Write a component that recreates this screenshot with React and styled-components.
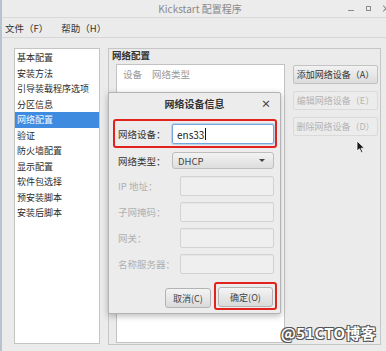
import React from "react";
import styled, { createGlobalStyle } from "styled-components";

const Global = createGlobalStyle`
  html, body { margin: 0; padding: 0; }
  body {
    width: 386px; height: 351px; overflow: hidden;
    background: #e6e6e6;
    font-family: "Noto Sans CJK SC", "Noto Sans", sans-serif;
    color: #333;
  }
`;

const Window = styled.div`
  position: relative;
  height: 351px;
  box-sizing: border-box;
  border-left: 2px solid #b7c4d0;
  background: #ebebeb;
  display: flex;
  flex-direction: column;
`;

const TitleBar = styled.div`
  height: 17px;
  display: grid;
  grid-template-columns: 1fr auto 1fr;
  align-items: center;
  background: #ececec;
  border-bottom: 1px solid #d9d9d9;
`;

const TitleText = styled.div`
  grid-column: 2;
  margin-left: 12px;
  font-size: 10px;
  color: #8a8a8a;
  white-space: nowrap;
  line-height: 17px;
`;

const Controls = styled.div`
  grid-column: 3;
  justify-self: end;
  display: flex;
  align-items: center;
  gap: 12px;
  margin-right: -3px;
`;

const Minimize = styled.span`
  width: 6px; height: 1px; background: #8a8a8a; margin-top: 4px;
`;
const Maximize = styled.span`
  width: 5px; height: 5px; border: 1px solid #8a8a8a; box-sizing: border-box;
`;
const CloseMark = styled.span`
  position: relative;
  width: 6px;
  height: 6px;
  &::before, &::after {
    content: "";
    position: absolute;
    left: -1px;
    top: 2.5px;
    width: 8px;
    height: 1px;
    background: #8a8a8a;
  }
  &::before { transform: rotate(45deg); }
  &::after { transform: rotate(-45deg); }
`;

const MenuBar = styled.div`
  height: 19px;
  display: flex;
  align-items: center;
  gap: 13px;
  padding-left: 3px;
  font-size: 9.5px;
  color: #333;
  border-bottom: 1px solid #d6d6d6;
`;

const MenuItem = styled.span`
  white-space: nowrap;
`;

const Body = styled.div`
  flex: 1;
  display: flex;
  gap: 8px;
  padding: 10px 5px 0 12px;
  min-height: 0;
`;

const SideList = styled.div`
  width: 86px;
  height: 296px;
  box-sizing: border-box;
  background: #fff;
  border: 1px solid #c4c4c4;
  padding-top: 1px;
  display: flex;
  flex-direction: column;
`;

const SideItem = styled.div`
  height: 15.5px;
  line-height: 15.5px;
  padding-left: 2px;
  font-size: 9px;
  white-space: nowrap;
  overflow: hidden;
  color: ${(p) => (p.$active ? "#f4f8ff" : "#2a2a2a")};
  background: ${(p) => (p.$active ? "#3f8be0" : "transparent")};
`;

const Frame = styled.div`
  position: relative;
  flex: 1;
  height: 297px;
  box-sizing: border-box;
  border: 1px solid #c6c6c6;
  display: flex;
  flex-direction: column;
`;

const FrameLabel = styled.div`
  height: 14px;
  line-height: 13px;
  padding-left: 3px;
  font-size: 9.5px;
  font-weight: 600;
  color: #333;
`;

const FrameContent = styled.div`
  flex: 1;
  display: flex;
  gap: 8px;
  padding: 1px 2px 1px 7px;
  min-height: 0;
`;

const DeviceList = styled.div`
  width: 169px;
  box-sizing: border-box;
  background: #fff;
  border: 1px solid #c2c2c2;
  display: flex;
  flex-direction: column;
`;

const ListHeader = styled.div`
  display: flex;
  gap: 10px;
  padding: 2px 0 0 6px;
  font-size: 9.5px;
  color: #9a9a9a;
  height: 16px;
`;

const ButtonColumn = styled.div`
  flex: 1;
  display: flex;
  flex-direction: column;
  gap: 7px;
  padding-top: 1px;
`;

const SideButton = styled.div`
  height: 19px;
  box-sizing: border-box;
  display: flex;
  align-items: center;
  justify-content: center;
  font-size: 9px;
  white-space: nowrap;
  border-radius: 2px;
  border: 1px solid ${(p) => (p.$disabled ? "#dadada" : "#c2c2c2")};
  color: ${(p) => (p.$disabled ? "#b4b4b4" : "#333")};
  background: ${(p) =>
    p.$disabled ? "#ececec" : "linear-gradient(#f2f2f2, #dcdcdc)"};
`;

const Dialog = styled.div`
  position: absolute;
  left: -1px;
  top: 43px;
  width: 173px;
  height: 222px;
  box-sizing: border-box;
  background: #ececec;
  border: 1px solid #b4b4b4;
  border-radius: 2px;
  box-shadow: 0 2px 6px rgba(0, 0, 0, 0.28);
  display: flex;
  flex-direction: column;
`;

const DialogTitle = styled.div`
  height: 20px;
  display: grid;
  grid-template-columns: 1fr auto 1fr;
  align-items: center;
`;

const DialogTitleText = styled.div`
  grid-column: 2;
  font-size: 10px;
  font-weight: 700;
  color: #333;
`;

const DialogClose = styled.div`
  grid-column: 3;
  justify-self: end;
  margin-right: 9px;
  font-size: 10px;
  font-weight: 700;
  color: #444;
`;

const Form = styled.div`
  display: flex;
  flex-direction: column;
  padding: 6px 3px 0 4px;
`;

const Highlight = styled.div`
  box-sizing: border-box;
  border: 2px solid #e2231d;
  border-radius: 3px;
  padding: ${(p) => p.$pad};
`;

const FieldRow = styled.div`
  display: flex;
  align-items: center;
  margin-top: ${(p) => p.$mt || 0}px;
  padding-left: ${(p) => p.$pl || 0}px;
  padding-right: ${(p) => p.$pr || 0}px;
`;

const Label = styled.div`
  width: ${(p) => (p.$wide ? 62 : 54)}px;
  flex: none;
  font-size: 9.5px;
  white-space: nowrap;
  color: ${(p) => (p.$disabled ? "#b0b0b0" : "#333")};
`;

const TextInput = styled.div`
  flex: 1;
  height: 20px;
  box-sizing: border-box;
  display: flex;
  align-items: center;
  padding-left: 4px;
  font-size: 10px;
  color: #222;
  border-radius: 2px;
  background: ${(p) => (p.$disabled ? "#efefef" : "#fff")};
  border: 1px solid ${(p) => (p.$focused ? "#74a7e0" : p.$disabled ? "#d3d3d3" : "#c2c2c2")};
  box-shadow: ${(p) => (p.$focused ? "0 0 0 1px rgba(116,167,224,0.35)" : "inset 0 1px 1px rgba(0,0,0,0.04)")};
`;

const Caret = styled.span`
  display: inline-block;
  width: 1px;
  height: 12px;
  background: #111;
  margin-left: 1px;
`;

const Select = styled.div`
  flex: 1;
  height: 17px;
  box-sizing: border-box;
  display: flex;
  align-items: center;
  justify-content: space-between;
  padding: 0 8px 0 5px;
  font-size: 9.5px;
  color: #444;
  border: 1px solid #bdbdbd;
  border-radius: 3px;
  background: linear-gradient(#f3f3f3, #dddddd);
`;

const Arrow = styled.span`
  width: 0; height: 0;
  border-left: 3px solid transparent;
  border-right: 3px solid transparent;
  border-top: 3px solid #444;
`;

const ButtonRow = styled.div`
  display: flex;
  justify-content: flex-end;
  align-items: flex-end;
  gap: 3px;
  margin-top: 8px;
`;

const DialogButton = styled.div`
  width: ${(p) => p.$w}px;
  height: 20px;
  box-sizing: border-box;
  display: flex;
  align-items: center;
  justify-content: center;
  font-size: 9px;
  color: #444;
  border: 1px solid #b3b3b3;
  border-radius: 3px;
  background: linear-gradient(#f4f4f4, #dadada);
  margin-bottom: ${(p) => p.$mb || 0}px;
`;

const Watermark = styled.div`
  position: absolute;
  right: 10px;
  bottom: 8px;
  font-size: 15px;
  font-weight: 700;
  color: #fff;
  letter-spacing: 0.3px;
  text-shadow: -1px -1px 0 #555, 1px -1px 0 #555, -1px 1px 0 #555, 1px 1px 0 #555;
`;

const Pointer = styled.svg`
  position: absolute;
  left: 354px;
  top: 140px;
`;

const sideItems = [
  "基本配置",
  "安装方法",
  "引导装载程序选项",
  "分区信息",
  "网络配置",
  "验证",
  "防火墙配置",
  "显示配置",
  "软件包选择",
  "预安装脚本",
  "安装后脚本",
];

export default function App() {
  return (
    <>
      <Global />
      <Window>
        <TitleBar>
          <TitleText>Kickstart 配置程序</TitleText>
          <Controls>
            <Minimize />
            <Maximize />
            <CloseMark />
          </Controls>
        </TitleBar>
        <MenuBar>
          <MenuItem>文件（F）</MenuItem>
          <MenuItem>帮助（H）</MenuItem>
        </MenuBar>
        <Body>
          <SideList>
            {sideItems.map((t) => (
              <SideItem key={t} $active={t === "网络配置"}>
                {t}
              </SideItem>
            ))}
          </SideList>
          <Frame>
            <FrameLabel>网络配置</FrameLabel>
            <FrameContent>
              <DeviceList>
                <ListHeader>
                  <span>设备</span>
                  <span>网络类型</span>
                </ListHeader>
              </DeviceList>
              <ButtonColumn>
                <SideButton>添加网络设备（A）</SideButton>
                <SideButton $disabled>编辑网络设备（E）</SideButton>
                <SideButton $disabled>删除网络设备（D）</SideButton>
              </ButtonColumn>
            </FrameContent>
            <Dialog>
              <DialogTitle>
                <DialogTitleText>网络设备信息</DialogTitleText>
                <DialogClose>×</DialogClose>
              </DialogTitle>
              <Form>
                <Highlight $pad="3px 1px 2px 3px">
                  <FieldRow>
                    <Label>网络设备：</Label>
                    <TextInput $focused>
                      ens33
                      <Caret />
                    </TextInput>
                  </FieldRow>
                </Highlight>
                <FieldRow $mt={4} $pl={5} $pr={3}>
                  <Label>网络类型：</Label>
                  <Select>
                    DHCP
                    <Arrow />
                  </Select>
                </FieldRow>
                <FieldRow $mt={7} $pl={5} $pr={3}>
                  <Label $disabled $wide>IP 地址：</Label>
                  <TextInput $disabled />
                </FieldRow>
                <FieldRow $mt={6} $pl={5} $pr={3}>
                  <Label $disabled $wide>子网掩码：</Label>
                  <TextInput $disabled />
                </FieldRow>
                <FieldRow $mt={6} $pl={5} $pr={3}>
                  <Label $disabled $wide>网关：</Label>
                  <TextInput $disabled />
                </FieldRow>
                <FieldRow $mt={6} $pl={5} $pr={3}>
                  <Label $disabled $wide>名称服务器：</Label>
                  <TextInput $disabled />
                </FieldRow>
                <ButtonRow>
                  <DialogButton $w={46} $mb={2}>取消(C)</DialogButton>
                  <Highlight $pad="3px 2px 1px 2px">
                    <DialogButton $w={55}>确定(O)</DialogButton>
                  </Highlight>
                </ButtonRow>
              </Form>
            </Dialog>
          </Frame>
        </Body>
        <Pointer width="10" height="14" viewBox="0 0 10 14">
          <path d="M1 1 L1 11 L3.5 8.8 L5.5 13 L7 12.3 L5.1 8.2 L8.5 8.2 Z" fill="#1a1a1a" stroke="#fff" strokeWidth="0.8" />
        </Pointer>
        <Watermark>@51CTO博客</Watermark>
      </Window>
    </>
  );
}
